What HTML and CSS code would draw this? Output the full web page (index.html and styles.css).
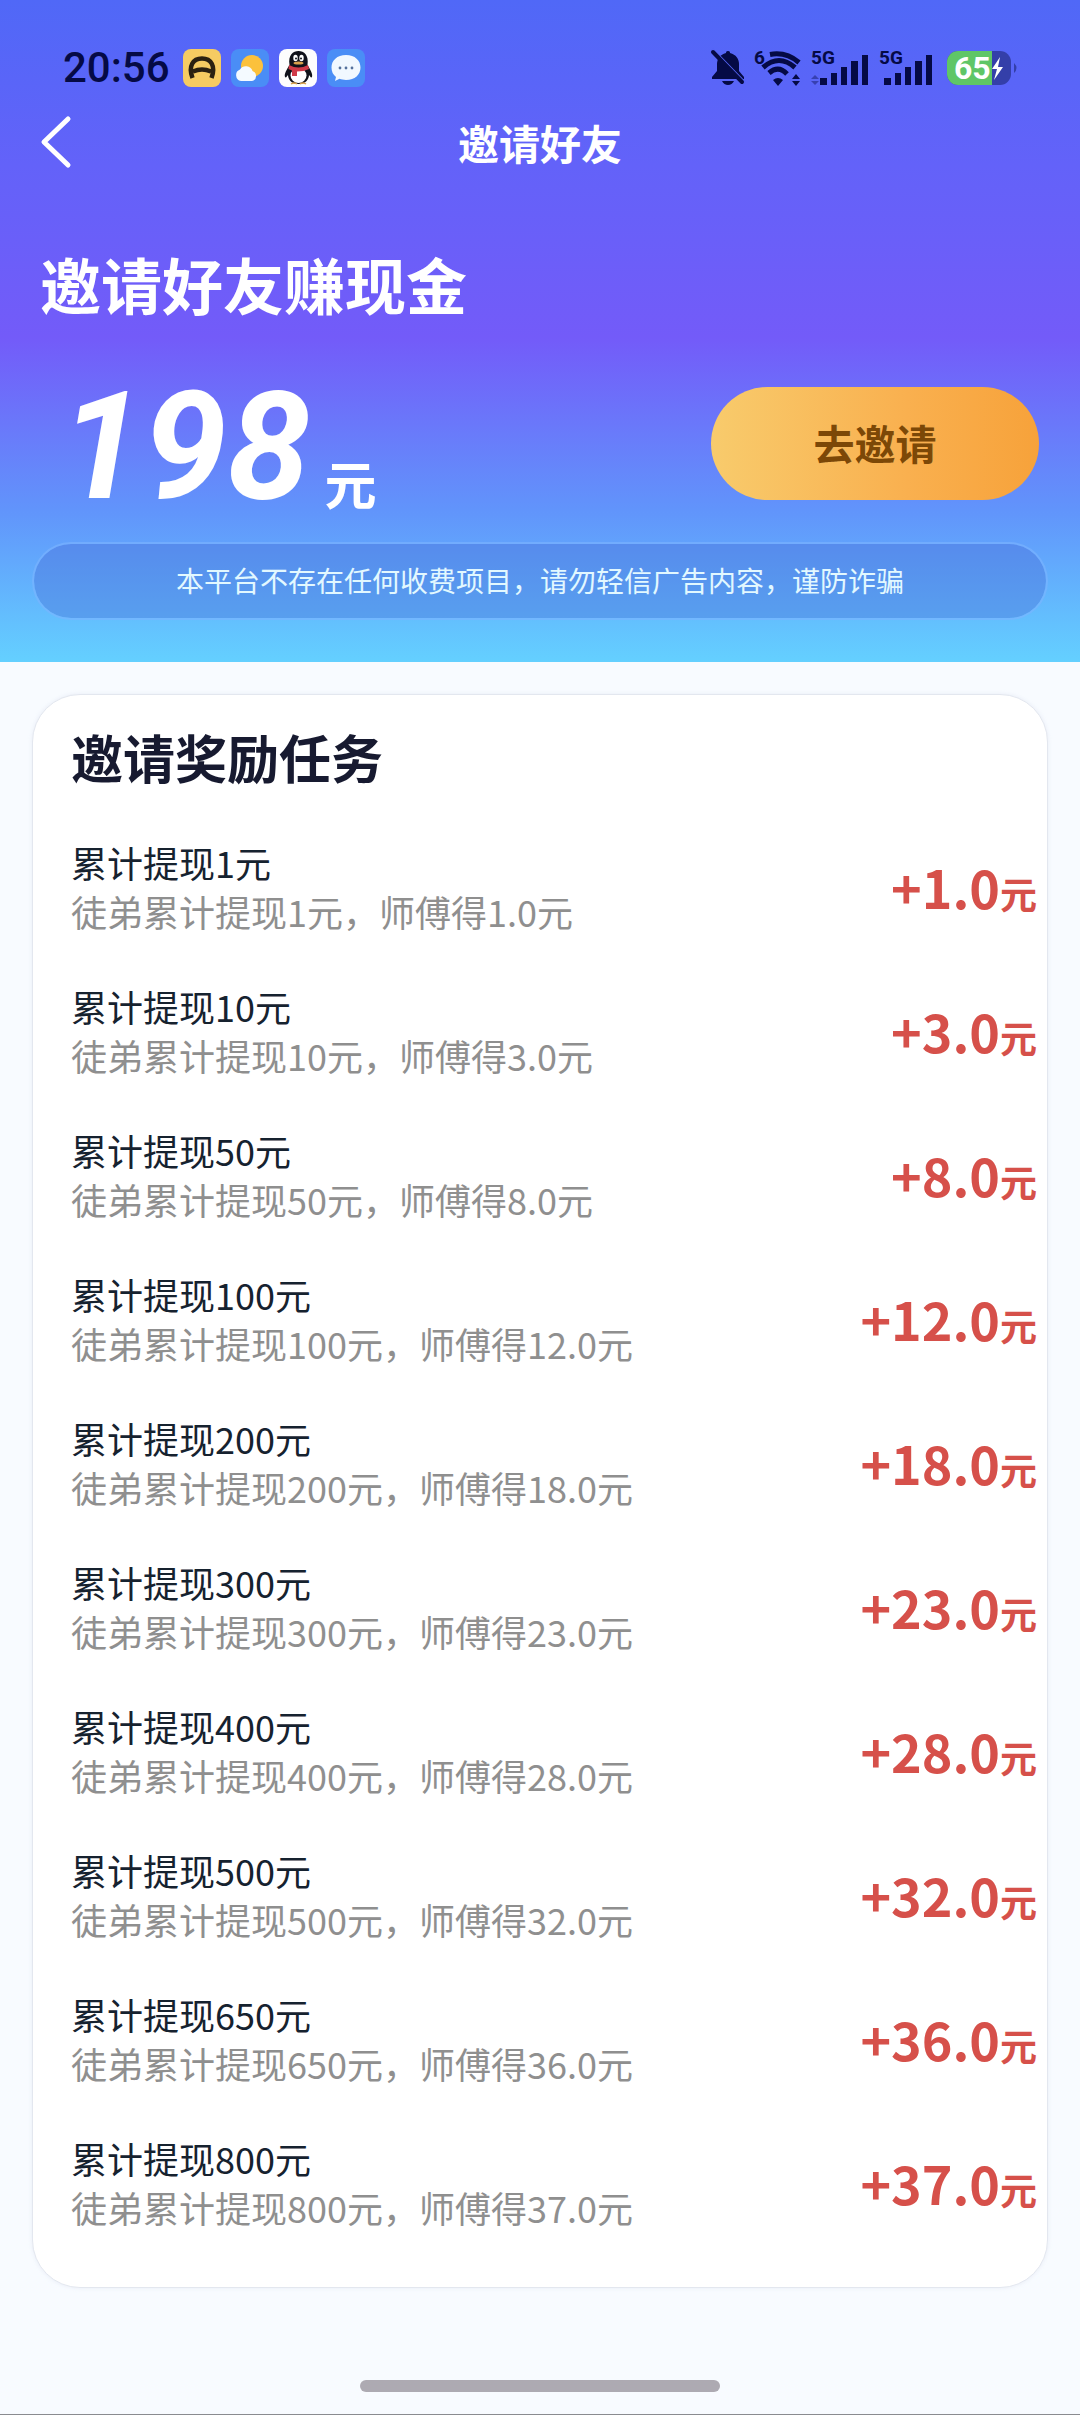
FILE: index.html
```html
<!DOCTYPE html>
<html lang="zh-CN">
<head>
    <meta charset="UTF-8">
    <meta name="viewport" content="width=device-width, initial-scale=1.0">
    <title>邀请好友</title>
    <link rel="stylesheet" href="styles.css">
</head>
<body>
    <header class="hero">
        <div class="status-bar">
            <div class="status-left">
                <span class="time">20:56</span>
                <svg class="app-icon" viewBox="0 0 38 38">
                    <rect width="38" height="38" rx="8" fill="#f6cb62"/>
                    <path d="M9.500 29C5 17 10 9.500 19 9.500S33 17 28.500 29M10 22.500q9-4 18 0" fill="none" stroke="#2b2111" stroke-width="4.500"/>
                </svg>
                <svg class="app-icon" viewBox="0 0 38 38">
                    <rect width="38" height="38" rx="8" fill="#4a8df6"/>
                    <circle cx="21" cy="17" r="11" fill="#fbc13c"/>
                    <path d="M10 32a6 6 0 0 1-1-11.500 7 7 0 0 1 12.500 1.500A5.200 5.200 0 0 1 21 32z" fill="#f4faff"/>
                </svg>
                <svg class="app-icon" viewBox="0 0 38 38">
                    <rect width="38" height="38" rx="8" fill="#fdfdfd"/>
                    <path d="M10.500 16C9 6 14 2 19.500 2S30 6 28.500 16c3 5 5.500 9 4.500 12-1 1.500-2-1-3-2 0 4-3 9-10.500 9S9 30 9 26c-1 1-2 3.500-3 2-1-3 1.500-7 4.500-12z" fill="#10121a"/>
                    <ellipse cx="19.500" cy="26.500" rx="8" ry="7.500" fill="#fff"/>
                    <ellipse cx="16.500" cy="9" rx="2.200" ry="3.200" fill="#fff"/>
                    <ellipse cx="22.500" cy="9" rx="2.200" ry="3.200" fill="#fff"/>
                    <circle cx="17" cy="9.500" r="1" fill="#10121a"/>
                    <circle cx="22" cy="9.500" r="1" fill="#10121a"/>
                    <ellipse cx="19.500" cy="14" rx="5" ry="1.600" fill="#d9a14c"/>
                    <path d="M10 16q9.500 5 19 0l1 4q-5 2.500-12 2.500V27h-5v-5.500L9.500 20z" fill="#cf3a48"/>
                    <path d="M12 35q3-2 6 0M21 35q3-2 6 0" fill="none" stroke="#d9a14c" stroke-width="1.500"/>
                </svg>
                <svg class="app-icon" viewBox="0 0 38 38">
                    <rect width="38" height="38" rx="8" fill="#4a8df6"/>
                    <path d="M19 6c9 0 14.500 5.500 14.500 12.500S28 31 19 31c-2.500 0-4.500-.5-6.500-1.200L8 32l1-4c-3-2.300-4.500-5.500-4.500-9.500C4.500 11.500 10 6 19 6z" fill="#f1f8ff"/>
                    <circle cx="13" cy="19" r="1.400" fill="#55719c"/>
                    <circle cx="19" cy="19" r="1.400" fill="#55719c"/>
                    <circle cx="25" cy="19" r="1.400" fill="#55719c"/>
                </svg>
            </div>
            <div class="status-right">
                <svg width="34" height="38" viewBox="0 0 34 38">
                    <path d="M17 2c2 0 2 1.500 2 2 6 1.500 9 6 9 11v7l5 6v2H1v-2l5-6v-7C6 10 9 5.500 15 4c0-.5 0-2 2-2zM11 32h12q-2 4-6 4t-6-4z"/>
                    <path d="M1 0 34 34" stroke="#5564f6" stroke-width="3"/>
                    <path d="M2 3 31 33" stroke="#050a45" stroke-width="4" stroke-linecap="round"/>
                </svg>
                <svg width="46" height="38" viewBox="0 0 46 38">
                    <text x="-1" y="15" class="tag">6</text>
                    <g fill="none" stroke="#050a45" stroke-width="5">
                        <path d="M15 5.500q16-3 29 8M8 18.500q16-14 32 0M14 24q9.500-8 18 1"/>
                    </g>
                    <path d="M18 31q5-4 10 0l-5 6zM37 30l4-5 4 5zM37 32l4 5 4-5z"/>
                </svg>
                <svg width="58" height="38" viewBox="0 0 58 38">
                    <text x="0" y="15" class="tag">5G</text>
                    <path d="M0 30l4-4 4 4zM0 32l4 4 4-4z" opacity=".4"/>
                    <path d="M9 29h7v7H9zM20 24h6v12h-6zM30 18h6v18h-6zM40 12h7v24h-7zM51 6h6v30h-6z"/>
                </svg>
                <svg width="54" height="38" viewBox="0 0 54 38">
                    <text x="0" y="15" class="tag">5G</text>
                    <path d="M5 29h7v7H5zM16 24h6v12h-6zM26 18h6v18h-6zM36 12h7v24h-7zM47 6h6v30h-6z"/>
                </svg>
                <svg class="battery" width="71" height="38" viewBox="0 0 71 38">
                    <rect y="2" width="64" height="34" rx="11" fill="#343fa9"/>
                    <path d="M11 2h34v34H11A11 11 0 0 1 0 25V13A11 11 0 0 1 11 2z" fill="#5fc667"/>
                    <path d="M67 14q5 5 0 10z" fill="#343fa9"/>
                    <text x="7" y="30" class="level">65</text>
                    <path d="M53 8 45 20h5l-3 11 9-13h-5z" fill="#fff"/>
                </svg>
            </div>
        </div>

        <nav class="nav">
            <button class="back" type="button" aria-label="返回">
                <svg width="30" height="52" viewBox="0 0 30 52"><path d="M27 3 3 26l24 23" fill="none" stroke="#fff" stroke-width="5" stroke-linecap="round" stroke-linejoin="round"/></svg>
            </button>
            <h1 class="nav-title">邀请好友</h1>
        </nav>

        <h2 class="hero-title">邀请好友赚现金</h2>
        <div class="cash">
            <div class="cash-amount">
                <span class="cash-number">198</span>
                <span class="cash-unit">元</span>
            </div>
            <button class="invite" type="button">去邀请</button>
        </div>
        <p class="notice">本平台不存在任何收费项目，请勿轻信广告内容，谨防诈骗</p>
    </header>

    <main class="card">
        <h2 class="card-title">邀请奖励任务</h2>
        <ul class="tasks">
            <li class="task">
                <div><p class="task-name">累计提现1元</p><p class="task-desc">徒弟累计提现1元，师傅得1.0元</p></div>
                <span class="reward">+1.0<small>元</small></span>
            </li>
            <li class="task">
                <div><p class="task-name">累计提现10元</p><p class="task-desc">徒弟累计提现10元，师傅得3.0元</p></div>
                <span class="reward">+3.0<small>元</small></span>
            </li>
            <li class="task">
                <div><p class="task-name">累计提现50元</p><p class="task-desc">徒弟累计提现50元，师傅得8.0元</p></div>
                <span class="reward">+8.0<small>元</small></span>
            </li>
            <li class="task">
                <div><p class="task-name">累计提现100元</p><p class="task-desc">徒弟累计提现100元，师傅得12.0元</p></div>
                <span class="reward">+12.0<small>元</small></span>
            </li>
            <li class="task">
                <div><p class="task-name">累计提现200元</p><p class="task-desc">徒弟累计提现200元，师傅得18.0元</p></div>
                <span class="reward">+18.0<small>元</small></span>
            </li>
            <li class="task">
                <div><p class="task-name">累计提现300元</p><p class="task-desc">徒弟累计提现300元，师傅得23.0元</p></div>
                <span class="reward">+23.0<small>元</small></span>
            </li>
            <li class="task">
                <div><p class="task-name">累计提现400元</p><p class="task-desc">徒弟累计提现400元，师傅得28.0元</p></div>
                <span class="reward">+28.0<small>元</small></span>
            </li>
            <li class="task">
                <div><p class="task-name">累计提现500元</p><p class="task-desc">徒弟累计提现500元，师傅得32.0元</p></div>
                <span class="reward">+32.0<small>元</small></span>
            </li>
            <li class="task">
                <div><p class="task-name">累计提现650元</p><p class="task-desc">徒弟累计提现650元，师傅得36.0元</p></div>
                <span class="reward">+36.0<small>元</small></span>
            </li>
            <li class="task">
                <div><p class="task-name">累计提现800元</p><p class="task-desc">徒弟累计提现800元，师傅得37.0元</p></div>
                <span class="reward">+37.0<small>元</small></span>
            </li>
        </ul>
    </main>

    <div class="home-indicator"></div>
</body>
</html>
```

FILE: styles.css
```css
* {
    box-sizing: border-box;
    margin: 0;
    padding: 0;
}
body {
    font-family: "Noto Sans CJK SC", sans-serif;
    background: #f8fbff;
    border-bottom: 1px solid #8a8b90;
}
button {
    font-family: inherit;
    border: none;
    cursor: pointer;
}
svg {
    display: block;
    flex: none;
    overflow: visible;
}

/* hero */
.hero {
    background: linear-gradient(#5068f7 0, #6362f9 25%, #735bf9 51%, #6194fb 77%, #64d0ff 100%);
    color: #fff;
    padding: 32px 32px 42px;
}
.status-bar {
    display: flex;
    justify-content: space-between;
    align-items: center;
    height: 72px;
    padding: 0 30px 0 31px;
}
.status-left,
.status-right {
    display: flex;
    align-items: center;
    gap: 10px;
    fill: #050a45;
}
.time {
    margin-right: 3px;
    font: 500 42px/48px Roboto, sans-serif;
    color: #050a45;
}
.app-icon {
    width: 38px;
    height: 38px;
}
.tag {
    font: 700 19px Roboto, sans-serif;
}
.level {
    font: 700 32px Roboto, sans-serif;
    fill: #fff;
}
.battery {
    margin-left: 4px;
}

.nav {
    display: grid;
    grid-template-columns: 60px 1fr 60px;
    align-items: center;
    height: 76px;
}
.back {
    background: none;
    padding-left: 9px;
}
.nav-title {
    grid-column: 2;
    text-align: center;
    font-size: 41px;
    line-height: 60px;
    font-weight: 700;
}
.hero-title {
    margin: 68px 8px 0;
    font-size: 61px;
    line-height: 72px;
}
.cash {
    display: flex;
    justify-content: space-between;
    align-items: flex-start;
    margin-top: 67px;
    padding: 0 9px 0 28px;
}
.cash-amount {
    display: flex;
    gap: 14px;
    height: 122px;
}
.cash-number {
    font: italic 700 150px/120px Roboto, sans-serif;
}
.cash-unit {
    align-self: flex-end;
    font-size: 52px;
    line-height: 52px;
    font-weight: 700;
}
.invite {
    width: 328px;
    height: 113px;
    padding-bottom: 4px;
    border-radius: 57px;
    background: linear-gradient(90deg, #f8cb6c, #f9b04f 60%, #f7a23a);
    color: #7c4807;
    font-size: 41px;
    font-weight: 700;
}
.notice {
    margin-top: 33px;
    padding: 15px 20px 17px;
    border: 2px solid rgba(125, 180, 255, 0.6);
    border-radius: 39px;
    background: rgba(68, 99, 208, 0.35);
    background-clip: padding-box;
    color: #e2f8ff;
    font-size: 28px;
    line-height: 42px;
    text-align: center;
}

/* task list */
.card {
    margin: 32px 32px 0;
    padding: 28px 10px 32px 38px;
    background: #fff;
    border: 1px solid #e3e7ef;
    border-radius: 48px;
    box-shadow: 0 0 4px rgba(210, 218, 232, 0.4);
}
.card-title {
    font-size: 52px;
    line-height: 68px;
    color: #171a30;
}
.tasks {
    list-style: none;
    margin-top: 24px;
}
.task {
    display: flex;
    justify-content: space-between;
    align-items: center;
    padding: 23px 0;
}
.task-name,
.task-desc {
    font-size: 36px;
    line-height: 49px;
}
.task-name {
    color: #16222f;
}
.task-desc {
    color: #8f8f8f;
}
.reward {
    color: #d6504a;
    font-size: 52px;
    line-height: 60px;
    font-weight: 700;
}
.reward small {
    font-size: 37px;
    line-height: 37px;
}

.home-indicator {
    width: 360px;
    height: 12px;
    margin: 92px auto 22px;
    border-radius: 6px;
    background: #adaab2;
}
```
